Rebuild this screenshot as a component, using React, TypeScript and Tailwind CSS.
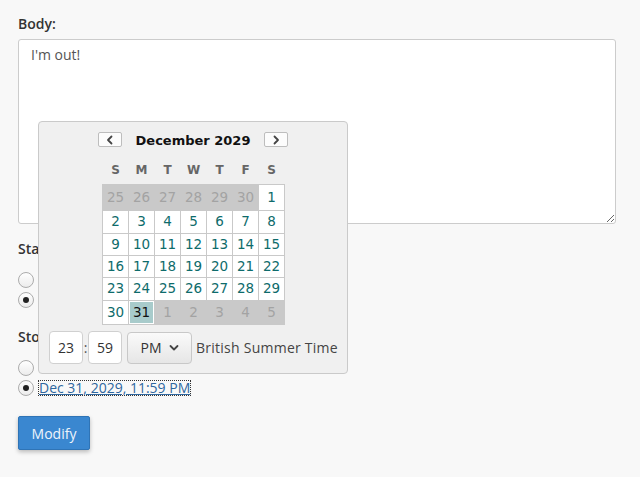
import React from "react";

type Day = { n: number; out?: boolean; selected?: boolean };

const weeks: Day[][] = [
  [{ n: 25, out: true }, { n: 26, out: true }, { n: 27, out: true }, { n: 28, out: true }, { n: 29, out: true }, { n: 30, out: true }, { n: 1 }],
  [2, 3, 4, 5, 6, 7, 8].map((n) => ({ n })),
  [9, 10, 11, 12, 13, 14, 15].map((n) => ({ n })),
  [16, 17, 18, 19, 20, 21, 22].map((n) => ({ n })),
  [23, 24, 25, 26, 27, 28, 29].map((n) => ({ n })),
  [{ n: 30 }, { n: 31, selected: true }, { n: 1, out: true }, { n: 2, out: true }, { n: 3, out: true }, { n: 4, out: true }, { n: 5, out: true }],
];

const weekdays = ["S", "M", "T", "W", "T", "F", "S"];

function Radio({ checked }: { checked?: boolean }) {
  return (
    <span className="flex h-4 w-4 shrink-0 items-center justify-center rounded-full border border-[#acacac] bg-gradient-to-b from-white to-[#ececec]">
      {checked && <span className="h-[6px] w-[6px] rounded-full bg-[#222]" />}
    </span>
  );
}

function Chevron({ dir }: { dir: "left" | "right" | "down" }) {
  const d =
    dir === "left" ? "M5.5 1.5 L2 5 L5.5 8.5" : dir === "right" ? "M2.5 1.5 L6 5 L2.5 8.5" : "M1.5 3 L5 6.5 L8.5 3";
  return (
    <svg width={dir === "down" ? 10 : 8} height="10" viewBox={dir === "down" ? "0 0 10 10" : "0 0 8 10"} fill="none">
      <path d={d} stroke="#444" strokeWidth="1.8" strokeLinecap="round" strokeLinejoin="round" />
    </svg>
  );
}

function DatePicker() {
  return (
    <div className="absolute left-[38px] top-[121px] h-[253px] w-[310px] rounded-[4px] border border-[#cacaca] bg-[#f0f0f0] pl-[10px] pt-[10px]">
      {/* Month header */}
      <div className="flex h-[15px] w-[288px] items-center justify-center">
        <button className="flex h-[15px] w-6 items-center justify-center rounded-[2px] border border-[#bdbdbd] bg-[#fcfcfc]">
          <Chevron dir="left" />
        </button>
        <div className="w-[142px] pt-px text-center font-['DejaVu_Sans',sans-serif] text-[13px] font-bold leading-none text-[#111]">
          December 2029
        </div>
        <button className="flex h-[15px] w-6 items-center justify-center rounded-[2px] border border-[#bdbdbd] bg-[#fcfcfc]">
          <Chevron dir="right" />
        </button>
      </div>

      {/* Weekdays */}
      <div className="ml-[53px] mt-[13px] grid w-[183px] grid-cols-[repeat(7,25px)] gap-x-px px-px font-['DejaVu_Sans',sans-serif] text-[12px] font-bold leading-5 text-[#666]">
        {weekdays.map((w, i) => (
          <div key={i} className="text-center">
            {w}
          </div>
        ))}
      </div>

      {/* Days */}
      <div className="ml-[53px] mt-[4px] grid w-[183px] grid-cols-[repeat(7,25px)] grid-rows-[25px_22px_21px_21px_22px_23px] gap-px border border-[#c9c9c9] bg-[#c9c9c9] font-['DejaVu_Sans',sans-serif] text-[13.5px] leading-none">
        {weeks.flat().map((d, i) =>
          d.out ? (
            <div key={i} className="flex items-center justify-center text-[#a3a3a3]">
              {d.n}
            </div>
          ) : d.selected ? (
            <div key={i} className="bg-white p-px">
              <div className="flex h-full w-full items-center justify-center bg-[#a8cbcb] text-[#111]">{d.n}</div>
            </div>
          ) : (
            <div key={i} className="flex items-center justify-center bg-white text-[#0e6b6b]">
              {d.n}
            </div>
          )
        )}
      </div>

      {/* Time */}
      <div className="mt-[6px] flex h-[33px] items-center whitespace-nowrap">
        <div className="flex h-[33px] w-[34px] items-center justify-center rounded-[4px] border border-[#d0d0d0] bg-white text-[#333]">
          23
        </div>
        <span className="w-[5px] text-center text-[#555]">:</span>
        <div className="flex h-[33px] w-[34px] items-center justify-center rounded-[4px] border border-[#d0d0d0] bg-white text-[#333]">
          59
        </div>
        <div className="ml-[5px] flex h-[32px] w-[65px] items-center justify-center gap-[7px] rounded-[4px] border border-[#c8c8c8] bg-gradient-to-b from-[#fafafa] to-[#e6e6e6] text-[#333]">
          <span>PM</span>
          <Chevron dir="down" />
        </div>
        <span className="ml-[4px] tracking-[0.25px] text-[#444]">British Summer Time</span>
      </div>
    </div>
  );
}

export default function App() {
  return (
    <div className="min-h-screen bg-[#f8f8f8] font-['Open_Sans',sans-serif] text-[14px] text-[#333]">
      <div className="relative px-[18px] pt-[14px]">
        <label className="block font-semibold leading-5">Body:</label>
        <textarea
          defaultValue="I'm out!"
          className="mt-[5px] block h-[185px] w-[598px] rounded-[3px] border border-[#cccccc] bg-white px-3 py-[5px] leading-5 text-[#555] outline-none"
        />

        {/* Start */}
        <div className="mt-[15px] font-semibold leading-5">Start:</div>
        <div className="mt-[11px]">
          <div className="flex h-5 items-center">
            <Radio />
          </div>
          <div className="flex h-5 items-center">
            <Radio checked />
          </div>
        </div>

        {/* Stop */}
        <div className="mt-[17px] font-semibold leading-5">Stop:</div>
        <div className="mt-[11px]">
          <div className="flex h-5 items-center">
            <Radio />
          </div>
          <div className="flex h-5 items-center gap-[4px]">
            <Radio checked />
            <a
              href="#"
              className="ml-px leading-[14px] text-[#2f679f] underline outline outline-1 outline-dotted outline-[#333]"
            >
              Dec 31, 2029, 11:59 PM
            </a>
          </div>
        </div>

        <button className="mt-[18px] h-[34px] w-[72px] rounded-[2px] border border-[#2f74b6] bg-[#3a87d0] text-[#eef4fb] shadow-[0_2px_4px_rgba(0,0,0,0.25)]">
          Modify
        </button>

        <DatePicker />
      </div>
    </div>
  );
}
